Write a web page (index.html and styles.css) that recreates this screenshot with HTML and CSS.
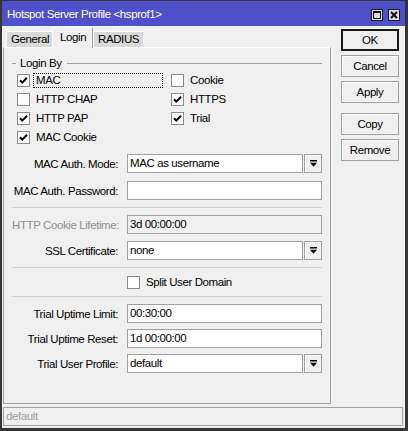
FILE: index.html
```html
<!DOCTYPE html>
<html lang="en">
<head>
<meta charset="UTF-8" />
<title>Hotspot Server Profile</title>
<link rel="stylesheet" href="styles.css">
</head>
<body>
<div class="window">
  <!-- Title bar -->
  <div class="titlebar">
    <span class="title">Hotspot Server Profile &lt;hsprof1&gt;</span>
    <div class="title-btns">
      <span class="tbtn"><svg width="8" height="8" viewBox="0 0 8 8"><path d="M0.5 0.5H7.5V7.5H0.5Z" fill="none" stroke="#111" stroke-width="1"/><rect x="0" y="0" width="8" height="2" fill="#111"/></svg></span>
      <span class="tbtn"><svg width="8" height="8" viewBox="0 0 8 8"><path d="M1 1L7 7M7 1L1 7" stroke="#111" stroke-width="2"/></svg></span>
    </div>
  </div>

  <div class="content">
    <!-- Tabs + panel -->
    <div class="tabs-area">
      <div class="tabs">
        <div class="tab t-general">General</div>
        <div class="tab active">Login</div>
        <div class="tab t-radius">RADIUS</div>
      </div>

      <div class="panel">
        <div class="legend"><span class="dash"></span><span class="legend-text">Login By</span><span class="legend-line"></span></div>
        <div class="checks">
          <div class="check"><span class="box"><svg width="11" height="11" viewBox="0 0 11 11"><path d="M2 5.2L4.3 7.6L9 2.8" fill="none" stroke="#000" stroke-width="2"/></svg></span><span class="check-label focus">MAC</span></div>
          <div class="check"><span class="box"></span><span class="check-label">Cookie</span></div>
          <div class="check"><span class="box"></span><span class="check-label">HTTP CHAP</span></div>
          <div class="check"><span class="box"><svg width="11" height="11" viewBox="0 0 11 11"><path d="M2 5.2L4.3 7.6L9 2.8" fill="none" stroke="#000" stroke-width="2"/></svg></span><span class="check-label">HTTPS</span></div>
          <div class="check"><span class="box"><svg width="11" height="11" viewBox="0 0 11 11"><path d="M2 5.2L4.3 7.6L9 2.8" fill="none" stroke="#000" stroke-width="2"/></svg></span><span class="check-label">HTTP PAP</span></div>
          <div class="check"><span class="box"><svg width="11" height="11" viewBox="0 0 11 11"><path d="M2 5.2L4.3 7.6L9 2.8" fill="none" stroke="#000" stroke-width="2"/></svg></span><span class="check-label">Trial</span></div>
          <div class="check"><span class="box"><svg width="11" height="11" viewBox="0 0 11 11"><path d="M2 5.2L4.3 7.6L9 2.8" fill="none" stroke="#000" stroke-width="2"/></svg></span><span class="check-label">MAC Cookie</span></div>
        </div>

        <div class="row r7">
          <label class="lbl">MAC Auth. Mode:</label>
          <div class="select"><div class="field">MAC as username</div><span class="drop"><svg width="7" height="7" viewBox="0 0 7 7"><rect x="0" y="0" width="7" height="1.5" fill="#000"/><path d="M0 2.8H7L3.5 6.8Z" fill="#000"/></svg></span></div>
        </div>
        <div class="row r8">
          <label class="lbl">MAC Auth. Password:</label>
          <div class="field"></div>
        </div>

        <div class="sep"></div>

        <div class="row r7">
          <label class="lbl disabled">HTTP Cookie Lifetime:</label>
          <div class="field off">3d 00:00:00</div>
        </div>
        <div class="row r7">
          <label class="lbl">SSL Certificate:</label>
          <div class="select"><div class="field">none</div><span class="drop"><svg width="7" height="7" viewBox="0 0 7 7"><rect x="0" y="0" width="7" height="1.5" fill="#000"/><path d="M0 2.8H7L3.5 6.8Z" fill="#000"/></svg></span></div>
        </div>

        <div class="sep"></div>

        <div class="row split">
          <span></span>
          <div class="check"><span class="box"></span><span class="check-label">Split User Domain</span></div>
        </div>

        <div class="sep flush"></div>

        <div class="row r7">
          <label class="lbl">Trial Uptime Limit:</label>
          <div class="field">00:30:00</div>
        </div>
        <div class="row r6">
          <label class="lbl">Trial Uptime Reset:</label>
          <div class="field">1d 00:00:00</div>
        </div>
        <div class="row r6">
          <label class="lbl">Trial User Profile:</label>
          <div class="select"><div class="field">default</div><span class="drop"><svg width="7" height="7" viewBox="0 0 7 7"><rect x="0" y="0" width="7" height="1.5" fill="#000"/><path d="M0 2.8H7L3.5 6.8Z" fill="#000"/></svg></span></div>
        </div>
      </div>
    </div>

    <!-- Side buttons -->
    <div class="buttons">
      <div class="btn default">OK</div>
      <div class="btn">Cancel</div>
      <div class="btn">Apply</div>
      <div class="btn gap">Copy</div>
      <div class="btn">Remove</div>
    </div>
  </div>

  <div class="statusbar">default</div>
</div>
</body>
</html>
```

FILE: styles.css
```css
:root {
  --bg: #f0f0f0;
  --line: #a0a0a0;
  --title: #4e51c9;
  --muted: #8f8f8f;
}
* { box-sizing: border-box; margin: 0; padding: 0; }
html, body { width: 408px; height: 431px; overflow: hidden; background: var(--bg); font-family: "Liberation Sans", Arial, sans-serif; font-size: 11.5px; letter-spacing: -0.4px; color: #000; }

.window { width: 408px; height: 431px; display: flex; flex-direction: column; border: solid #363636; border-width: 1px 3px 3px 2px; background: var(--bg); }

/* --------------------  Title bar  ----------------- */
.titlebar { height: 25px; flex: none; display: flex; align-items: center; justify-content: space-between; padding: 0 5px; background: var(--title); color: #fff; }
.title { padding-top: 1px; }
.title-btns { display: flex; gap: 5px; margin-top: 2px; }
.tbtn { width: 12px; height: 12px; display: flex; align-items: center; justify-content: center; background: #dcdcdc; border: 1px solid #1e1e1e; }

/* --------------------  Content  ------------------- */
.content { flex: 1; display: flex; min-height: 0; }
.tabs-area { width: 328px; margin-left: 1px; display: flex; flex-direction: column; }

.tabs { height: 21px; flex: none; display: flex; align-items: flex-end; padding-left: 3px; }
.tab { height: 16px; padding-left: 4px; line-height: 15px; white-space: nowrap; background: #d9d9d9; border-top: 1px solid #fff; border-left: 1px solid #fff; }
.tab.t-general { width: 46px; }
.tab.t-radius { width: 50px; }
.tab.active { position: relative; z-index: 1; width: 41px; height: 21px; margin-bottom: -1px; padding-left: 7px; line-height: 18px; background: var(--bg); border-right: 1px solid var(--line); }

.panel { flex: 1; display: flex; flex-direction: column; padding: 0 8px; border: 1px solid var(--line); border-top-color: #fff; }

/* --------------------  Login By group  ------------ */
.legend { height: 14px; margin-top: 8px; display: flex; align-items: center; }
.dash { width: 4px; border-top: 1px solid var(--line); }
.legend-text { margin: 0 5px 0 4px; }
.legend-line { flex: 1; border-top: 1px solid var(--line); }

.checks { margin-top: 1px; padding-left: 5px; display: grid; grid-template-columns: 154px 1fr; grid-auto-rows: 19px; }
.check { display: flex; align-items: center; }
.box { width: 13px; height: 13px; flex: none; display: flex; align-items: center; justify-content: center; background: #fff; border: 1px solid #8a8a8a; }
.check-label { margin-left: 3px; padding: 0 2px; line-height: 13px; border: 1px dotted transparent; }
.check-label.focus { flex: 1; margin-right: 8px; border-color: #000; }

/* --------------------  Form rows  ----------------- */
.row { height: 19px; display: grid; grid-template-columns: 106px 195px; column-gap: 9px; align-items: center; }
.row.r6 { margin-top: 6px; }
.row.r7 { margin-top: 7px; }
.row.r8 { margin-top: 8px; }
.row.split { height: 28px; }
.lbl { text-align: right; white-space: nowrap; }
.lbl.disabled { color: var(--muted); }

.field { height: 19px; padding: 0 2px; line-height: 17px; background: #fff; border: 1px solid var(--line); white-space: nowrap; overflow: hidden; }
.field.off { background: var(--bg); }
.select { display: flex; gap: 1px; }
.select .field { flex: 1; }
.drop { width: 18px; height: 19px; flex: none; display: flex; align-items: center; justify-content: center; background: var(--bg); border: 1px solid var(--line); box-shadow: inset 1px 1px #fff; }

.sep { height: 1px; margin-top: 7px; background: #d2d2d2; }
.sep.flush { margin-top: 0; }

/* --------------------  Buttons  ------------------- */
.buttons { width: 58px; margin: 3px 0 0 10px; display: flex; flex-direction: column; }
.btn { height: 22px; margin-top: 4px; display: flex; align-items: center; justify-content: center; background: var(--bg); border: 1px solid var(--line); box-shadow: inset 1px 1px #fff; }
.btn.default { margin-top: 0; border: 2px solid #1a1a1a; box-shadow: none; }
.btn.gap { margin-top: 10px; }

/* --------------------  Status bar  ---------------- */
.statusbar { height: 19px; flex: none; margin: 3px 2px 2px 1px; padding-left: 2px; line-height: 17px; color: var(--line); border: 1px solid var(--line); }
```
